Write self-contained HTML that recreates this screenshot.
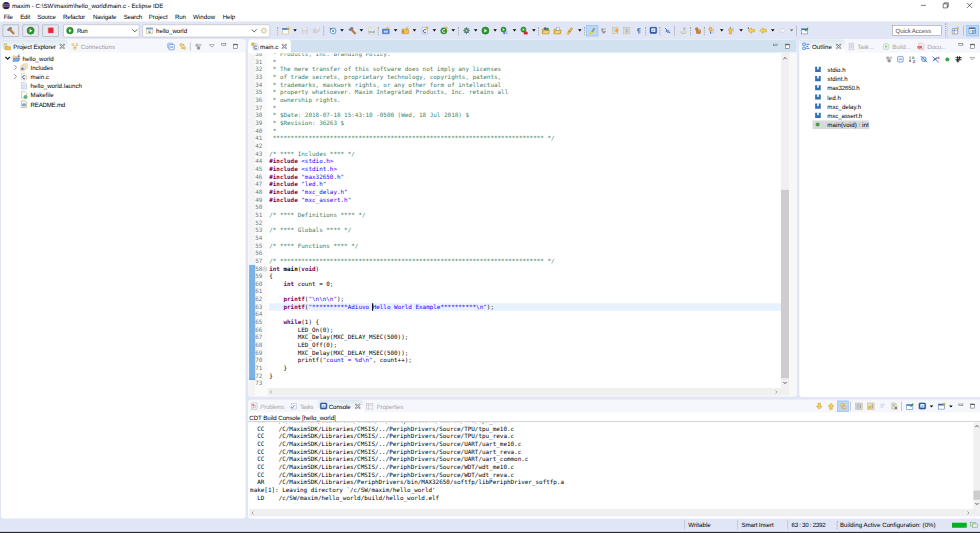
<!DOCTYPE html><html><head><meta charset="utf-8"><title>maxim - Eclipse IDE</title><style>
*{box-sizing:border-box;margin:0;padding:0}
html,body{width:980px;height:533px;overflow:hidden;background:#E1E6F6}
#root{text-rendering:geometricPrecision;position:absolute;left:0;top:0;width:1920px;height:1044.25px;transform:scale(0.510417);transform-origin:0 0;background:#E1E6F6;font-family:"Liberation Sans",sans-serif;font-size:12px;color:#000;overflow:hidden}
.a{position:absolute}
.t{position:absolute;white-space:pre;line-height:16px;height:16px}
.g{color:#8a8a8a}
.mono{font-family:"DejaVu Sans Mono","Liberation Mono",monospace;font-size:11.627px;white-space:pre;line-height:15px;height:15px;position:absolute}
.c{color:#3F7F5F}.k{color:#7F0055;font-weight:bold}.s{color:#2A00FF}.b{font-weight:bold}
.ln{color:#787878;text-align:right;width:40px}
.panel{position:absolute;background:#fff;border-radius:6px;overflow:hidden}
.tabrow{position:absolute;left:0;top:0;right:0;height:25px;background:#EFF2FB}
.btn{position:absolute;border:1px solid #9a9a9a;background:#E6E8F2;border-radius:2px}
.combo{position:absolute;border:1px solid #ADADAD;background:#fff;border-radius:2px}
.sep{position:absolute;width:1px;background:#9a9aa0}
.dots{position:absolute;width:2px;border-left:2px dotted #9c9a94;opacity:.85}
svg{position:absolute;overflow:visible}
</style></head><body><div id="root">
<div class="a" style="left:0.0px;top:0.0px;width:1920.0px;height:42.0px;background:#fff"></div>
<svg style="left:4px;top:3px" width="16" height="16" viewBox="0 0 16 16"><circle cx="8" cy="8" r="7.3" fill="#2C2255"/><rect x="1" y="6" width="14" height="1" fill="#fff" opacity=".7"/><rect x="1" y="8.5" width="14" height="1" fill="#fff" opacity=".7"/><path d="M2.800 3.200A7.300 7.300 0 0 0 2.800 12.800" stroke="#F0A040" stroke-width="1.300" fill="none"/></svg>
<div class="t " style="left:23.5px;top:4.0px;letter-spacing:0.033px;">maxim - C:\SW\maxim\hello_world\main.c - Eclipse IDE</div>
<svg style="left:1782.9px;top:0" width="140" height="22" viewBox="0 0 140 22">
<path d="M21.1 10.5h10" stroke="#000" stroke-width="1" fill="none"/>
<path d="M64.9 7.5h8v8h-8z M66.9 7.5v-2h8v8h-2" stroke="#000" stroke-width="1" fill="none"/>
<path d="M111.6 5.5l10 10 M111.6 15.5l10 -10" stroke="#000" stroke-width="1.1" fill="none"/>
</svg>
<div class="t " style="left:7.2px;top:24.9px;letter-spacing:-0.460px;">File</div>
<div class="t " style="left:39.6px;top:24.9px;letter-spacing:-0.370px;">Edit</div>
<div class="t " style="left:73.1px;top:24.9px;letter-spacing:-0.329px;">Source</div>
<div class="t " style="left:123.4px;top:24.9px;letter-spacing:-0.281px;">Refactor</div>
<div class="t " style="left:182.2px;top:24.9px;letter-spacing:-0.214px;">Navigate</div>
<div class="t " style="left:242.4px;top:24.9px;letter-spacing:-0.361px;">Search</div>
<div class="t " style="left:291.5px;top:24.9px;letter-spacing:-0.046px;">Project</div>
<div class="t " style="left:342.9px;top:24.9px;letter-spacing:-0.219px;">Run</div>
<div class="t " style="left:378.1px;top:24.9px;letter-spacing:0.136px;">Window</div>
<div class="t " style="left:436.5px;top:24.9px;letter-spacing:-0.194px;">Help</div>
<div class="btn" style="left:4.9px;top:47.6px;width:32.1px;height:24.3px;"></div>
<div class="btn" style="left:43.7px;top:47.6px;width:32.1px;height:24.3px;"></div>
<div class="btn" style="left:83.1px;top:47.6px;width:32.1px;height:24.3px;"></div>
<svg style="left:13.0px;top:51.8px" width="16" height="16" viewBox="0 0 16 16"><path d="M5.200 7.200L7.800 4.800L15 12.500Q15.300 14.800 12.800 15Z" fill="#C87A2A" stroke="#8A4F17" stroke-width=".7"/><path d="M0.800 6.500L5.500 1.800Q8 0.500 10.500 3.200L8.500 5.800L7 4.800L3.800 8.800Z" fill="#7A7A7A" stroke="#5a5a5a" stroke-width=".5"/></svg>
<svg style="left:51.8px;top:51.8px" width="16" height="16" viewBox="0 0 16 16"><circle cx="8" cy="8" r="7" fill="#2E9A2E" stroke="#1D6F1D" stroke-width="1"/><path d="M6 4.2l5.2 3.8-5.2 3.8z" fill="#fff"/></svg>
<div class="a" style="left:93.6px;top:54.3px;width:11.0px;height:11.0px;background:#E8242C;border:1px solid #F05A60;border-radius:1px"></div>
<div class="combo" style="left:124.2px;top:47.6px;width:149.3px;height:25.7px;"></div>
<svg style="left:129.1px;top:52.1px" width="16" height="16" viewBox="0 0 16 16"><circle cx="8" cy="8" r="6.5" fill="#2E9A2E" stroke="#1D6F1D" stroke-width="1"/><path d="M6 4.2l5.2 3.8-5.2 3.8z" fill="#fff"/></svg>
<div class="t " style="left:150.7px;top:52.8px;letter-spacing:-0.415px;">Run</div>
<svg style="left:257.5px;top:56.3px" width="12" height="8" viewBox="0 0 12 8"><path d="M1 1.5l5 5 5-5" stroke="#444" stroke-width="1.700" fill="none"/></svg>
<div class="combo" style="left:279.4px;top:47.6px;width:249.6px;height:25.7px;"></div>
<svg style="left:284.9px;top:51.8px" width="16" height="16" viewBox="0 0 16 16"><rect x="1.5" y="2.5" width="13" height="11" fill="#F4F8FC" stroke="#C9B26A"/><rect x="1.5" y="2.5" width="13" height="3" fill="#6E9BD1"/><text x="8" y="12.5" font-size="9" font-weight="bold" fill="#3B67A8" text-anchor="middle" font-family="Liberation Sans,sans-serif">c</text></svg>
<div class="t " style="left:305.8px;top:52.8px;letter-spacing:0.003px;">hello_world</div>
<svg style="left:492.2px;top:56.3px" width="12" height="8" viewBox="0 0 12 8"><path d="M1 1.5l5 5 5-5" stroke="#444" stroke-width="1.700" fill="none"/></svg>
<svg style="left:508.6px;top:51.8px" width="16" height="16" viewBox="0 0 16 16"><circle cx="8" cy="8" r="4" fill="none" stroke="#D9D3B0" stroke-width="2.4"/><path d="M8 1v14M1 8h14M3 3l10 10M13 3L3 13" stroke="#D9D3B0" stroke-width="1.6"/><circle cx="8" cy="8" r="2" fill="#fff"/></svg>
<div class="dots" style="left:543.1px;top:51.9px;height:16.7px"></div>
<svg style="left:551.7px;top:51.8px" width="16" height="16" viewBox="0 0 16 16"><rect x="1.5" y="3.5" width="12" height="11" fill="#FFFDF2" stroke="#C9B27A"/><rect x="1" y="3" width="13" height="3.500" fill="#3F7FD0"/><path d="M12.5 0.5l1 2.2 2.2 1-2.2 1-1 2.2-1-2.2-2.2-1 2.2-1z" fill="#F2C230" stroke="#B98A1A" stroke-width=".5"/></svg>
<svg style="left:573.8px;top:57.4px" width="8" height="5" viewBox="0 0 8 5"><path d="M0.5 0.5h7l-3.5 4z" fill="#000"/></svg>
<svg style="left:589.0px;top:51.8px" width="16" height="16" viewBox="0 0 16 16"><path d="M2 2h12v12H2z" fill="#CFCFD6"/><rect x="4" y="2" width="8" height="5" fill="#E9E9EE"/><rect x="4.5" y="9" width="7" height="5" fill="#E0E0E6"/></svg>
<svg style="left:611.7px;top:51.8px" width="16" height="16" viewBox="0 0 16 16"><path d="M1 4h9v9H1z" fill="#CFCFD6"/><path d="M5 1h10v10H5z" fill="#D6D6DC"/><rect x="7" y="1" width="6" height="4" fill="#EAEAEE"/></svg>
<div class="sep" style="left:633.5px;top:50.0px;height:19.6px;background:#9a9aa0"></div>
<svg style="left:643.6px;top:51.8px" width="16" height="16" viewBox="0 0 16 16"><circle cx="8.500" cy="8.500" r="5.500" fill="#F2F8FC" stroke="#6FB0DA" stroke-width="2.200"/><circle cx="8.500" cy="9" r="1.600" fill="#2F5FA8"/><path d="M8.500 5.500v3" stroke="#3F6FAE" stroke-width="1.200" fill="none"/><path d="M1.500 2.500l5 1.500-3 3z" fill="#5a6a7a"/></svg>
<svg style="left:666.0px;top:57.4px" width="8" height="5" viewBox="0 0 8 5"><path d="M0.5 0.5h7l-3.5 4z" fill="#000"/></svg>
<!-- hammer -->
<svg style="left:682.4px;top:51.8px" width="16" height="16" viewBox="0 0 16 16"><path d="M5.200 7.200L7.800 4.800L15 12.500Q15.300 14.800 12.800 15Z" fill="#C87A2A" stroke="#8A4F17" stroke-width=".7"/><path d="M0.800 6.500L5.500 1.800Q8 0.500 10.500 3.200L8.500 5.800L7 4.800L3.800 8.800Z" fill="#7A7A7A" stroke="#5a5a5a" stroke-width=".5"/></svg>
<svg style="left:704.4px;top:57.4px" width="8" height="5" viewBox="0 0 8 5"><path d="M0.5 0.5h7l-3.5 4z" fill="#000"/></svg>
<svg style="left:719.6px;top:51.8px" width="16" height="16" viewBox="0 0 16 16"><path d="M2.500 1.500h7.500l3.500 3.500v9.500h-11z" fill="#FDFCF4" stroke="#CDB987"/><path d="M5 5h5" stroke="#7FA3D6" stroke-width="1.200"/><text x="8" y="13" font-size="6.500" font-weight="bold" fill="#3F6FBF" text-anchor="middle" font-family="Liberation Sans,sans-serif">010</text></svg>
<div class="dots" style="left:740.0px;top:51.9px;height:16.7px"></div>
<svg style="left:747.7px;top:51.8px" width="16" height="16" viewBox="0 0 16 16"><path d="M1.5 5h13v9h-13z" fill="#4F86D6" stroke="#2F5FA8"/><rect x="4" y="8" width="8" height="4" fill="#BFD6F5"/><path d="M11.5 0.5l1 2.2 2.2 1-2.2 1-1 2.2-1-2.2-2.2-1 2.2-1z" fill="#F2C230" stroke="#B98A1A" stroke-width=".5"/></svg>
<svg style="left:770.5px;top:57.4px" width="8" height="5" viewBox="0 0 8 5"><path d="M0.5 0.5h7l-3.5 4z" fill="#000"/></svg>
<svg style="left:786.1px;top:51.8px" width="16" height="16" viewBox="0 0 16 16"><path d="M1.5 5h5l1.5 1.5h6.5v7.5h-13z" fill="#F1C14B" stroke="#B88A21"/><rect x="2.5" y="8" width="3" height="4" fill="#4F86D6"/><path d="M11.5 0.5l1 2.2 2.2 1-2.2 1-1 2.2-1-2.2-2.2-1 2.2-1z" fill="#F2C230" stroke="#B98A1A" stroke-width=".5"/></svg>
<svg style="left:808.3px;top:57.4px" width="8" height="5" viewBox="0 0 8 5"><path d="M0.5 0.5h7l-3.5 4z" fill="#000"/></svg>
<svg style="left:824.1px;top:51.8px" width="16" height="16" viewBox="0 0 16 16"><path d="M3 1.5h10v13H3z" fill="#F6F8FC" stroke="#8DA3C4"/><path d="M10.5 7a3 3 0 1 0 0 4" stroke="#2F5FA8" stroke-width="1.8" fill="none"/><path d="M12.5 0l.9 2 2 .9-2 .9-.9 2-.9-2-2-.9 2-.9z" fill="#F2C230" stroke="#B98A1A" stroke-width=".5"/></svg>
<svg style="left:846.5px;top:57.4px" width="8" height="5" viewBox="0 0 8 5"><path d="M0.5 0.5h7l-3.5 4z" fill="#000"/></svg>
<svg style="left:861.9px;top:51.8px" width="16" height="16" viewBox="0 0 16 16"><circle cx="7.5" cy="8.5" r="6" fill="#2E9A2E" stroke="#1D6F1D"/><path d="M10 6.5a3 3 0 1 0 0 4" stroke="#fff" stroke-width="1.6" fill="none"/><path d="M12.5 0l.9 2 2 .9-2 .9-.9 2-.9-2-2-.9 2-.9z" fill="#F2C230" stroke="#B98A1A" stroke-width=".5"/></svg>
<svg style="left:884.3px;top:57.4px" width="8" height="5" viewBox="0 0 8 5"><path d="M0.5 0.5h7l-3.5 4z" fill="#000"/></svg>
<div class="dots" style="left:896.9px;top:51.9px;height:16.7px"></div>
<svg style="left:905.6px;top:51.8px" width="16" height="16" viewBox="0 0 16 16"><path d="M8 1v14M1 8h14M3 3l10 10M13 3L3 13" stroke="#3B6F6A" stroke-width="1.3"/><ellipse cx="8" cy="8" rx="4" ry="4.5" fill="#4C8F86" stroke="#2D5F5A"/><circle cx="8" cy="8" r="1.8" fill="#D7E36B"/></svg>
<svg style="left:927.8px;top:57.4px" width="8" height="5" viewBox="0 0 8 5"><path d="M0.5 0.5h7l-3.5 4z" fill="#000"/></svg>
<svg style="left:943.2px;top:51.8px" width="16" height="16" viewBox="0 0 16 16"><circle cx="8" cy="8" r="7" fill="#2E9A2E" stroke="#1D6F1D"/><path d="M6 4.2l5.2 3.8-5.2 3.8z" fill="#fff"/></svg>
<svg style="left:965.8px;top:57.4px" width="8" height="5" viewBox="0 0 8 5"><path d="M0.5 0.5h7l-3.5 4z" fill="#000"/></svg>
<svg style="left:980.4px;top:51.8px" width="16" height="16" viewBox="0 0 16 16"><circle cx="6.5" cy="6" r="5" fill="#2E9A2E" stroke="#1D6F1D"/><path d="M5 3.4l3.8 2.6-3.8 2.6z" fill="#fff"/><rect x="6" y="10" width="4" height="5" fill="#5E8FD0"/><rect x="11" y="9" width="3" height="6" fill="#9DBBE6"/></svg>
<svg style="left:1003.8px;top:57.4px" width="8" height="5" viewBox="0 0 8 5"><path d="M0.5 0.5h7l-3.5 4z" fill="#000"/></svg>
<svg style="left:1019.2px;top:51.8px" width="16" height="16" viewBox="0 0 16 16"><circle cx="6.5" cy="6" r="5" fill="#2E9A2E" stroke="#1D6F1D"/><path d="M5 3.4l3.8 2.6-3.8 2.6z" fill="#fff"/><path d="M7.5 11.5h7v3.5h-7z M9 11.5v-1.5h4v1.5" fill="#D8262C" stroke="#A31A1F" stroke-width=".6"/></svg>
<svg style="left:1041.8px;top:57.4px" width="8" height="5" viewBox="0 0 8 5"><path d="M0.5 0.5h7l-3.5 4z" fill="#000"/></svg>
<div class="dots" style="left:1054.4px;top:51.9px;height:16.7px"></div>
<svg style="left:1061.3px;top:51.8px" width="16" height="16" viewBox="0 0 16 16"><path d="M1.5 5h4.5l1.2 1.5h7.3v7.5h-13z" fill="#E9B84A" stroke="#B88A21"/><path d="M1.5 14l2.5-6h11.5l-2.5 6z" fill="#F6D77F" stroke="#B88A21"/><circle cx="7" cy="4" r="2.8" fill="#5B4FB0"/><circle cx="11.5" cy="5" r="2.8" fill="#2E9A2E"/></svg>
<svg style="left:1084.2px;top:51.8px" width="16" height="16" viewBox="0 0 16 16"><path d="M1.5 5h4.5l1.2 1.5h7.3v7.5h-13z" fill="#E9B84A" stroke="#B88A21"/><path d="M1.5 14l2.5-6h11.5l-2.5 6z" fill="#F6D77F" stroke="#B88A21"/><rect x="6" y="2" width="6" height="5" fill="#F6F8FC" stroke="#8DA3C4"/></svg>
<svg style="left:1107.8px;top:51.8px" width="16" height="16" viewBox="0 0 16 16"><path d="M2 14l9-12 3.5 2.5-9 11z" fill="#E9B84A" stroke="#B88A21" stroke-width=".8"/><path d="M6 8l4 3" stroke="#8a8a8a" stroke-width="2"/><path d="M2 14l1-3 2.5 2z" fill="#F9E9A8"/></svg>
<svg style="left:1131.5px;top:57.4px" width="8" height="5" viewBox="0 0 8 5"><path d="M0.5 0.5h7l-3.5 4z" fill="#000"/></svg>
<div class="dots" style="left:1144.1px;top:51.9px;height:16.7px"></div>
<div class="a" style="left:1148.1px;top:49.0px;width:23.5px;height:21.6px;background:#BBD7F7;border:1px solid #8DBBEF"></div>
<svg style="left:1151.8px;top:51.8px" width="16" height="16" viewBox="0 0 16 16"><path d="M4 13l7.5-10.5 2.5 2-7 10z" fill="#8C8F78"/><path d="M2 13.5l5-4 3 2-4 3.5z" fill="#F5E21E" stroke="#C7B40E" stroke-width=".5"/></svg>
<svg style="left:1174.8px;top:51.8px" width="16" height="16" viewBox="0 0 16 16"><circle cx="5" cy="6" r="2.5" fill="#9a9a9a"/><circle cx="10" cy="5" r="2" fill="#bdbdbd"/><path d="M3 9h10l-5 5z" fill="#8a8a8a"/></svg>
<svg style="left:1197.9px;top:51.8px" width="16" height="16" viewBox="0 0 16 16"><rect x="1.5" y="1.5" width="11" height="12" fill="#E6E0C8" stroke="#C9BC8C"/><rect x="4" y="4" width="5" height="7" fill="#BFD0EA"/><path d="M9 4l5 2-2 6-4-2z" fill="#E9A63A"/></svg>
<svg style="left:1220.4px;top:51.8px" width="16" height="16" viewBox="0 0 16 16"><rect x="2" y="1.5" width="12" height="13" fill="#E0DDD0" stroke="#C9BC8C"/><ellipse cx="8" cy="8" rx="2" ry="4" fill="#B7C9E6" stroke="#8FA8D0"/></svg>
<svg style="left:1242.9px;top:52.7px" width="16" height="16" viewBox="0 0 16 16"><path d="M6 3h6M8 3v10M10.5 3v10" stroke="#4F7FBF" stroke-width="1.5" fill="none"/><path d="M8 3a3 3 0 0 0 0 6z" fill="#4F7FBF"/></svg>
<div class="dots" style="left:1263.7px;top:51.9px;height:16.7px"></div>
<svg style="left:1272.1px;top:51.8px" width="16" height="16" viewBox="0 0 16 16"><rect x="1.5" y="1.5" width="13" height="12" rx="2" fill="#2F5FA8" stroke="#1F4586"/><rect x="4" y="3.5" width="8" height="7" fill="#EAF1FA"/><path d="M6 8h3V6" stroke="#2F5FA8" fill="none"/></svg>
<div class="dots" style="left:1292.1px;top:51.9px;height:16.7px"></div>
<svg style="left:1299.8px;top:51.8px" width="16" height="16" viewBox="0 0 16 16"><path d="M3 3l10 10" stroke="#34508E" stroke-width="1.6"/><path d="M5 5l6 6-1.5 1.5-5.5-2.5z" fill="#5A8FCF"/><circle cx="9" cy="9" r="2.5" fill="#6FA0D8"/></svg>
<div class="sep" style="left:1321.0px;top:50.0px;height:19.6px;background:#9a9aa0"></div>
<svg style="left:1331.1px;top:51.8px" width="16" height="16" viewBox="0 0 16 16"><path d="M3 9a5 4.5 0 1 0 10 0" fill="none" stroke="#CFC8A6" stroke-width="2.6"/><path d="M9 2l4 2.5-4 2.5z" fill="#9FB79F"/><path d="M9 2v8" stroke="#9a9a8a" stroke-width="1"/></svg>
<div class="dots" style="left:1351.8px;top:51.9px;height:16.7px"></div>
<svg style="left:1358.5px;top:51.8px" width="16" height="16" viewBox="0 0 16 16"><circle cx="6" cy="5" r="3.5" fill="#C9822F"/><rect x="5" y="6" width="9" height="8" rx="2" fill="#B5752B"/><path d="M7 8h6M7 10.5h6M9 6.5v7M11.5 6.5v7" stroke="#E7B26A" stroke-width=".7"/></svg>
<div class="dots" style="left:1379.4px;top:51.9px;height:16.7px"></div>
<svg style="left:1385.0px;top:51.8px" width="16" height="16" viewBox="0 0 16 16"><ellipse cx="7" cy="5.5" rx="3" ry="4.5" fill="#F1C14B" stroke="#C9962A"/><rect x="6" y="10" width="2.5" height="4" fill="#4F7FBF"/><path d="M12.5 4v10" stroke="#9a9aa0"/></svg>
<svg style="left:1410.1px;top:57.4px" width="8" height="5" viewBox="0 0 8 5"><path d="M0.5 0.5h7l-3.5 4z" fill="#000"/></svg>
<svg style="left:1424.2px;top:51.8px" width="16" height="16" viewBox="0 0 16 16"><path d="M7 2l4.5 5h-2.5v7.5h-4v-7.5h-2.5z" fill="#F1C14B" stroke="#C9962A"/><path d="M12.5 2v9" stroke="#9a9aa0"/><circle cx="7" cy="1.5" r="1" fill="#4F7FBF"/></svg>
<svg style="left:1448.1px;top:57.4px" width="8" height="5" viewBox="0 0 8 5"><path d="M0.5 0.5h7l-3.5 4z" fill="#000"/></svg>
<svg style="left:1463.9px;top:51.8px" width="16" height="16" viewBox="0 0 16 16"><path d="M1.5 8l6.5-5.5v3h6.5v5h-6.5v3z" fill="#F7D154" stroke="#C9962A"/><rect x="1" y="2" width="2.5" height="2.5" fill="#34508E"/></svg>
<svg style="left:1487.2px;top:51.8px" width="16" height="16" viewBox="0 0 16 16"><path d="M1.5 8l6.5-5.5v3h6.5v5h-6.5v3z" fill="#F7D154" stroke="#C9962A"/></svg>
<svg style="left:1509.5px;top:57.4px" width="8" height="5" viewBox="0 0 8 5"><path d="M0.5 0.5h7l-3.5 4z" fill="#000"/></svg>
<svg style="left:1525.1px;top:51.8px" width="16" height="16" viewBox="0 0 16 16"><path d="M14.5 8l-6.5-5.5v3h-6.5v5h6.5v3z" fill="#F4F4F8" stroke="#C8C8D0"/></svg>
<svg style="left:1547.3px;top:57.4px" width="8" height="5" viewBox="0 0 8 5"><path d="M0.5 0.5h7l-3.5 4z" fill="#777"/></svg>
<div class="sep" style="left:1560.0px;top:50.0px;height:19.6px;background:#9a9aa0"></div>
<svg style="left:1569.1px;top:51.8px" width="16" height="16" viewBox="0 0 16 16"><rect x="1.5" y="4.5" width="12" height="10" fill="#fff" stroke="#3C6DB0"/><rect x="1.5" y="4.5" width="12" height="2.5" fill="#3C6DB0"/><path d="M8 8l5-6 2 1.5-5 6z" fill="#2E9A2E"/></svg>
<div class="a" style="left:1747.8px;top:49.2px;width:97.0px;height:20.8px;background:#fff;border:1px solid #8a8a8a"></div>
<div class="t " style="left:1754.4px;top:52.8px;letter-spacing:-0.206px;color:#555">Quick Access</div>
<div class="dots" style="left:1852.4px;top:46.0px;height:27.4px"></div>
<div class="sep" style="left:1855.6px;top:43.1px;height:33.3px;background:#CDD3E8"></div>
<svg style="left:1864.0px;top:51.8px" width="16" height="16" viewBox="0 0 16 16"><rect x="1.5" y="4.5" width="11" height="10" fill="#fff" stroke="#3C6DB0"/><path d="M1.5 8h11M6 4.500v10" stroke="#3C6DB0"/><rect x="2" y="9" width="4" height="5" fill="#E9D27A"/><path d="M12 0l1 2.3 2.3 1-2.3 1-1 2.300-1-2.300-2.300-1 2.300-1z" fill="#F2C230" stroke="#B98A1A" stroke-width=".5"/></svg>
<div class="sep" style="left:1886.6px;top:50.0px;height:19.6px;background:#9a9aa0"></div>
<div class="a" style="left:1893.2px;top:49.0px;width:24.5px;height:21.9px;background:#BBD7F7;border:1px solid #8DBBEF"></div>
<svg style="left:1897.3px;top:51.8px" width="16" height="16" viewBox="0 0 16 16"><rect x="1.500" y="2.500" width="12" height="11" fill="#fff" stroke="#3C6DB0"/><rect x="1.5" y="2.5" width="12" height="2.5" fill="#3C6DB0"/><rect x="3" y="7" width="4" height="5" fill="#E9D27A"/><rect x="8" y="8" width="6" height="6" fill="#DCE8F8" stroke="#3C6DB0"/><text x="11" y="13.3" font-size="6" fill="#2F5FA8" text-anchor="middle" font-family="Liberation Sans,sans-serif" font-weight="bold">c</text></svg>
<div class="panel" style="left:2.4px;top:77.4px;width:478.8px;height:938.6px;border-radius:6px;">
<div class="tabrow" style="height:26.0px;background:#F5F7FC"></div>
<div class="a" style="left:0;top:0;width:131.3px;height:26.0px;background:linear-gradient(#DDE7F0,#FFFFFF 90%);border-radius:6px 10px 0 0"></div>
<div class="a" style="left:-2.35px;top:0;width:600px;height:100%">
<svg style="left:6.3px;top:5.3px" width="16" height="16" viewBox="0 0 16 16"><path d="M2 2.500h5l1 2h-6z" fill="#E9D9A0" stroke="#B8A15A" stroke-width=".8"/><path d="M4.500 7h4l1 1.500h5v6h-10z" fill="#F1C14B" stroke="#B88A21"/><path d="M2 4.500v8h2.500" fill="none" stroke="#B8A15A"/></svg>
<div class="t " style="left:25.7px;top:6.3px;letter-spacing:-0.119px;">Project Explorer</div>
<svg style="left:116.4px;top:7.3px" width="12" height="12" viewBox="0 0 12 12"><path d="M1.5 1.500l9 9M10.500 1.500l-9 9" stroke="#777" stroke-width="3.200" fill="none"/><path d="M2 2l8 8M10 2l-8 8" stroke="#fff" stroke-width="1.300" fill="none"/></svg>
<svg style="left:138.9px;top:5.3px" width="16" height="16" viewBox="0 0 16 16"><path d="M3 4l9 8M12 4l-8 8" stroke="#E5B64C" stroke-width="1.3"/><rect x="2" y="3" width="3.500" height="3.500" fill="#fff" stroke="#D9A431"/><rect x="10" y="3" width="3.500" height="3.500" fill="#fff" stroke="#D9A431"/><rect x="6" y="10" width="3.500" height="3.500" fill="#fff" stroke="#D9A431"/></svg>
<div class="t " style="left:158.3px;top:6.3px;letter-spacing:0.027px;color:#9a9a9a">Connections</div>
<svg style="left:327.0px;top:5.3px" width="16" height="16" viewBox="0 0 16 16"><rect x="1.500" y="1.500" width="10" height="10" rx="1.500" fill="#DCE9F8" stroke="#6C9FD8" stroke-width="1.200"/><rect x="4" y="4" width="10.500" height="10.500" rx="1.500" fill="#F2F7FD" stroke="#4F86CF" stroke-width="1.300"/><path d="M6.500 9.200h5.500" stroke="#3F73BF" stroke-width="1.600"/></svg>
<svg style="left:349.6px;top:5.3px" width="16" height="16" viewBox="0 0 16 16"><path d="M1.500 5l3.500-3.500v2.200h5.500v2.600h-5.500v2.200z" fill="#FBE9A8" stroke="#D09A25" stroke-width="1.100"/><path d="M14.500 11l-3.500-3.500v2.200h-5.500v2.600h5.500v2.200z" fill="#FBE9A8" stroke="#D09A25" stroke-width="1.100"/></svg>
<div class="sep" style="left:372.2px;top:5.3px;height:16px;background:#9a9aa0"></div>
<svg style="left:380.9px;top:5.3px" width="16" height="16" viewBox="0 0 16 16"><circle cx="5" cy="5.500" r="3.300" fill="#B4B4B4"/><circle cx="11" cy="5" r="3" fill="#CACACA"/><circle cx="8" cy="11" r="3.500" fill="#9A9A9A"/></svg>
<svg style="left:409.3px;top:8.3px" width="12" height="8" viewBox="0 0 12 8"><path d="M1.500 1.500h9l-4.500 5z" fill="#fff" stroke="#666" stroke-width="1"/></svg>
<svg style="left:432.9px;top:7.1px" width="12" height="12" viewBox="0 0 12 12"><rect x="1.5" y="1.5" width="8" height="3" fill="#fff" stroke="#555"/></svg>
<svg style="left:455.8px;top:7.3px" width="12" height="12" viewBox="0 0 12 12"><rect x="1.5" y="1.5" width="8" height="8" fill="#fff" stroke="#555"/><rect x="1.5" y="1.5" width="8" height="2" fill="#555"/></svg>
<svg style="left:9.7px;top:31.7px" width="10" height="10" viewBox="0 0 10 10"><path d="M0.500 2.500l4.500 4.500 4.500-4.500" stroke="#1a1a1a" stroke-width="2.500" fill="none"/></svg>
<svg style="left:23.5px;top:28.7px" width="16" height="16" viewBox="0 0 16 16"><path d="M1.500 3.500h4l1.500 1.500h5.500v5h-11z" fill="#F7E19A" stroke="#D9A431"/><path d="M1 14l2.500-6h11.500l-2.500 6z" fill="#7FAEEA" stroke="#2F62B8"/><text x="10.500" y="6" font-size="9" font-weight="bold" fill="#2F5FA8" font-family="Liberation Sans,sans-serif">c</text></svg>
<div class="t " style="left:44.1px;top:29.7px;letter-spacing:0.048px;">hello_world</div>
<svg style="left:25.4px;top:49.7px" width="10" height="10" viewBox="0 0 10 10"><path d="M3 0.500l4.500 4.500-4.500 4.500" stroke="#8a8a8a" stroke-width="1.900" fill="none"/></svg>
<svg style="left:39.2px;top:46.7px" width="16" height="16" viewBox="0 0 16 16"><path d="M7.500 1h7v9h-7z" fill="#FBF6E6" stroke="#D2B070" stroke-width=".9"/><path d="M4.500 3h7v9h-7z" fill="#FBF6E6" stroke="#D2B070" stroke-width=".9"/><path d="M1.500 5.500h7v9.500h-7z" fill="#FBF6E6" stroke="#D2B070" stroke-width=".9"/><rect x="3" y="8.500" width="4" height="4.500" fill="#3F6FBF"/></svg>
<div class="t " style="left:59.8px;top:47.7px;letter-spacing:-0.077px;">Includes</div>
<svg style="left:25.4px;top:67.7px" width="10" height="10" viewBox="0 0 10 10"><path d="M3 0.500l4.500 4.500-4.500 4.500" stroke="#8a8a8a" stroke-width="1.900" fill="none"/></svg>
<svg style="left:39.2px;top:64.7px" width="16" height="16" viewBox="0 0 16 16"><path d="M3 1.500h7l3 3v10H3z" fill="#FDFCF4" stroke="#CDB987"/><path d="M10.500 7.300a3 3 0 1 0 0 4" stroke="#2F5FA8" stroke-width="1.800" fill="none"/></svg>
<div class="t " style="left:59.8px;top:65.7px;letter-spacing:0.232px;">main.c</div>
<svg style="left:39.2px;top:82.7px" width="16" height="16" viewBox="0 0 16 16"><path d="M3 1.500h7l3 3v10H3z" fill="#EEF2FA" stroke="#9DB0CF"/><path d="M5 6h6M5 8h6M5 10h6M5 12h4" stroke="#B9C7E0" stroke-width=".9"/></svg>
<div class="t " style="left:59.8px;top:83.7px;letter-spacing:0.084px;">hello_world.launch</div>
<svg style="left:39.2px;top:100.7px" width="16" height="16" viewBox="0 0 16 16"><path d="M3 1.500h7l3 3v10H3z" fill="#FBFBF6" stroke="#A8A890"/><circle cx="11" cy="12" r="3.500" fill="#5FB87A" stroke="#3A8A55" stroke-width=".6"/></svg>
<div class="t " style="left:59.8px;top:101.7px;letter-spacing:0.109px;">Makefile</div>
<svg style="left:39.2px;top:118.7px" width="16" height="16" viewBox="0 0 16 16"><path d="M3 1.500h7l3 3v10H3z" fill="#F6F8FC" stroke="#A89048"/><rect x="5" y="7" width="6" height="5" fill="#3F6FAE"/><path d="M6 8.500h4M6 10.500h4" stroke="#fff" stroke-width=".8"/></svg>
<div class="t " style="left:59.8px;top:119.7px;letter-spacing:-0.417px;">README.md</div>
</div>
</div>
<div class="panel" style="left:486.3px;top:77.4px;width:1074.8px;height:699.6px;">
<div class="tabrow" style="height:26.0px;background:#D2E1F0"></div>
<div class="a" style="left:0;top:0;width:84.2px;height:27.0px;background:#fff;border-radius:6px 8px 0 0"></div>
<svg style="left:5.3px;top:5.7px" width="16" height="16" viewBox="0 0 16 16"><path d="M4 2.500h7l3 3v9H4z" fill="#F6F8FC" stroke="#8DA3C4"/><path d="M11.500 8a3 3 0 1 0 0 4" stroke="#2F5FA8" stroke-width="1.800" fill="none"/><path d="M1 1h5v5H1z" fill="#E9C85A" stroke="#A8862A" stroke-width=".8"/></svg>
<div class="t " style="left:23.1px;top:6.7px;letter-spacing:0.085px;">main.c</div>
<svg style="left:65.1px;top:7.7px" width="12" height="12" viewBox="0 0 12 12"><path d="M1.5 1.500l9 9M10.500 1.500l-9 9" stroke="#777" stroke-width="3.200" fill="none"/><path d="M2 2l8 8M10 2l-8 8" stroke="#fff" stroke-width="1.300" fill="none"/></svg>
<svg style="left:1028.1px;top:7.5px" width="12" height="12" viewBox="0 0 12 12"><rect x="1.5" y="1.5" width="8" height="3" fill="#fff" stroke="#555"/></svg>
<svg style="left:1050.6px;top:7.7px" width="12" height="12" viewBox="0 0 12 12"><rect x="1.5" y="1.5" width="8" height="8" fill="#fff" stroke="#555"/><rect x="1.5" y="1.5" width="8" height="2" fill="#555"/></svg>
<div class="a" style="left:0;top:28.0px;right:0;bottom:0;overflow:hidden">
<div class="a" style="left:0;top:-2px;width:37.8px;bottom:0;background:#FBFBFB"></div>
<div class="a" style="left:0;top:-2px;width:13.7px;bottom:0;background:#F4F4F4"></div>
<div class="a" style="left:41.1px;top:488.8px;width:1003.1px;height:15px;background:#E8F2FE"></div>
<div class="a" style="left:1.6px;top:413.7px;width:12.1px;height:225.3px;background:#78B2E6;border-bottom:2px solid #5A9BDC"></div>
<div class="mono ln" style="left:-12.4px;top:-6.8px">30</div>
<div class="mono" style="left:41.1px;top:-6.8px"><span class="c"> * Products, Inc. Branding Policy.</span></div>
<div class="mono ln" style="left:-12.4px;top:8.2px">31</div>
<div class="mono" style="left:41.1px;top:8.2px"><span class="c"> *</span></div>
<div class="mono ln" style="left:-12.4px;top:23.3px">32</div>
<div class="mono" style="left:41.1px;top:23.3px"><span class="c"> * The mere transfer of this software does not imply any licenses</span></div>
<div class="mono ln" style="left:-12.4px;top:38.3px">33</div>
<div class="mono" style="left:41.1px;top:38.3px"><span class="c"> * of trade secrets, proprietary technology, copyrights, patents,</span></div>
<div class="mono ln" style="left:-12.4px;top:53.3px">34</div>
<div class="mono" style="left:41.1px;top:53.3px"><span class="c"> * trademarks, maskwork rights, or any other form of intellectual</span></div>
<div class="mono ln" style="left:-12.4px;top:68.3px">35</div>
<div class="mono" style="left:41.1px;top:68.3px"><span class="c"> * property whatsoever. Maxim Integrated Products, Inc. retains all</span></div>
<div class="mono ln" style="left:-12.4px;top:83.3px">36</div>
<div class="mono" style="left:41.1px;top:83.3px"><span class="c"> * ownership rights.</span></div>
<div class="mono ln" style="left:-12.4px;top:98.3px">37</div>
<div class="mono" style="left:41.1px;top:98.3px"><span class="c"> *</span></div>
<div class="mono ln" style="left:-12.4px;top:113.4px">38</div>
<div class="mono" style="left:41.1px;top:113.4px"><span class="c"> * $Date: 2018-07-18 15:43:10 -0500 (Wed, 18 Jul 2018) $</span></div>
<div class="mono ln" style="left:-12.4px;top:128.4px">39</div>
<div class="mono" style="left:41.1px;top:128.4px"><span class="c"> * $Revision: 36263 $</span></div>
<div class="mono ln" style="left:-12.4px;top:143.4px">40</div>
<div class="mono" style="left:41.1px;top:143.4px"><span class="c"> *</span></div>
<div class="mono ln" style="left:-12.4px;top:158.4px">41</div>
<div class="mono" style="left:41.1px;top:158.4px"><span class="c"> **************************************************************************** */</span></div>
<div class="mono ln" style="left:-12.4px;top:173.4px">42</div>
<div class="mono ln" style="left:-12.4px;top:188.4px">43</div>
<div class="mono" style="left:41.1px;top:188.4px"><span class="c">/* **** Includes **** */</span></div>
<div class="mono ln" style="left:-12.4px;top:203.5px">44</div>
<div class="mono" style="left:41.1px;top:203.5px"><span class="k">#include</span> <span class="s">&lt;stdio.h&gt;</span></div>
<div class="mono ln" style="left:-12.4px;top:218.5px">45</div>
<div class="mono" style="left:41.1px;top:218.5px"><span class="k">#include</span> <span class="s">&lt;stdint.h&gt;</span></div>
<div class="mono ln" style="left:-12.4px;top:233.5px">46</div>
<div class="mono" style="left:41.1px;top:233.5px"><span class="k">#include</span> <span class="s">&quot;max32650.h&quot;</span></div>
<div class="mono ln" style="left:-12.4px;top:248.5px">47</div>
<div class="mono" style="left:41.1px;top:248.5px"><span class="k">#include</span> <span class="s">&quot;led.h&quot;</span></div>
<div class="mono ln" style="left:-12.4px;top:263.5px">48</div>
<div class="mono" style="left:41.1px;top:263.5px"><span class="k">#include</span> <span class="s">&quot;mxc_delay.h&quot;</span></div>
<div class="mono ln" style="left:-12.4px;top:278.5px">49</div>
<div class="mono" style="left:41.1px;top:278.5px"><span class="k">#include</span> <span class="s">&quot;mxc_assert.h&quot;</span></div>
<div class="mono ln" style="left:-12.4px;top:293.6px">50</div>
<div class="mono ln" style="left:-12.4px;top:308.6px">51</div>
<div class="mono" style="left:41.1px;top:308.6px"><span class="c">/* **** Definitions **** */</span></div>
<div class="mono ln" style="left:-12.4px;top:323.6px">52</div>
<div class="mono ln" style="left:-12.4px;top:338.6px">53</div>
<div class="mono" style="left:41.1px;top:338.6px"><span class="c">/* **** Globals **** */</span></div>
<div class="mono ln" style="left:-12.4px;top:353.6px">54</div>
<div class="mono ln" style="left:-12.4px;top:368.6px">55</div>
<div class="mono" style="left:41.1px;top:368.6px"><span class="c">/* **** Functions **** */</span></div>
<div class="mono ln" style="left:-12.4px;top:383.7px">56</div>
<div class="mono ln" style="left:-12.4px;top:398.7px">57</div>
<div class="mono" style="left:41.1px;top:398.7px"><span class="c">/* ************************************************************************** */</span></div>
<div class="mono ln" style="left:-12.4px;top:413.7px">58</div>
<div class="mono" style="left:41.1px;top:413.7px"><span class="k">int</span> <span class="b">main</span>(<span class="k">void</span>)</div>
<div class="mono ln" style="left:-12.4px;top:428.7px">59</div>
<div class="mono" style="left:41.1px;top:428.7px">{</div>
<div class="mono ln" style="left:-12.4px;top:443.7px">60</div>
<div class="mono" style="left:41.1px;top:443.7px">    <span class="k">int</span> count = 0;</div>
<div class="mono ln" style="left:-12.4px;top:458.8px">61</div>
<div class="mono ln" style="left:-12.4px;top:473.8px">62</div>
<div class="mono" style="left:41.1px;top:473.8px">    <span class="k">printf</span>(<span class="s">&quot;\n\n\n&quot;</span>);</div>
<div class="mono ln" style="left:-12.4px;top:488.8px">63</div>
<div class="mono" style="left:41.1px;top:488.8px">    <span class="k">printf</span>(<span class="s">&quot;**********Adiuvo Hello World Example**********\n&quot;</span>);</div>
<div class="mono ln" style="left:-12.4px;top:503.8px">64</div>
<div class="mono ln" style="left:-12.4px;top:518.8px">65</div>
<div class="mono" style="left:41.1px;top:518.8px">    <span class="k">while</span>(1) {</div>
<div class="mono ln" style="left:-12.4px;top:533.8px">66</div>
<div class="mono" style="left:41.1px;top:533.8px">        LED_On(0);</div>
<div class="mono ln" style="left:-12.4px;top:548.9px">67</div>
<div class="mono" style="left:41.1px;top:548.9px">        MXC_Delay(MXC_DELAY_MSEC(500));</div>
<div class="mono ln" style="left:-12.4px;top:563.9px">68</div>
<div class="mono" style="left:41.1px;top:563.9px">        LED_Off(0);</div>
<div class="mono ln" style="left:-12.4px;top:578.9px">69</div>
<div class="mono" style="left:41.1px;top:578.9px">        MXC_Delay(MXC_DELAY_MSEC(500));</div>
<div class="mono ln" style="left:-12.4px;top:593.9px">70</div>
<div class="mono" style="left:41.1px;top:593.9px">        printf(<span class="s">&quot;count = %d\n&quot;</span>, count++);</div>
<div class="mono ln" style="left:-12.4px;top:608.9px">71</div>
<div class="mono" style="left:41.1px;top:608.9px">    }</div>
<div class="mono ln" style="left:-12.4px;top:623.9px">72</div>
<div class="mono" style="left:41.1px;top:623.9px">}</div>
<div class="mono ln" style="left:-12.4px;top:639.0px">73</div>
<svg style="left:27.3px;top:416.2px" width="10" height="10" viewBox="0 0 10 10"><circle cx="5" cy="5" r="4" fill="#fff" stroke="#9a9a9a"/><path d="M3 5h4" stroke="#666"/></svg>
<div class="a" style="left:243.1px;top:488.8px;width:2px;height:15px;background:#000"></div>
</div>
<div class="a" style="left:1043.9px;top:26.0px;width:15.5px;height:657.0px;background:#F0F0F0"></div>
<div class="a" style="left:1043.9px;top:295.1px;width:15.5px;height:368.1px;background:#CDCDCD"></div>
<div class="a" style="left:1059.3px;top:26.0px;width:16.7px;bottom:0;background:#F8F8F8"></div>
<div class="a" style="left:1043.9px;top:682.8px;width:15.5px;height:14.5px;background:#F0F0F0"></div>
<svg style="left:1047.5px;top:33.2px" width="8" height="8" viewBox="0 0 10 10"><path d="M1 6l4-4 4 4" stroke="#4a4a4a" stroke-width="2.200" fill="none"/></svg>
<svg style="left:1047.5px;top:669.0px" width="8" height="8" viewBox="0 0 10 10"><path d="M1 3l4 4 4-4" stroke="#4a4a4a" stroke-width="2.200" fill="none"/></svg>
<div class="a" style="left:38.0px;top:682.8px;width:1006.2px;height:14.7px;background:#F0F0F0"></div>
<svg style="left:41.6px;top:686.2px" width="8" height="8" viewBox="0 0 10 10"><path d="M6 1l-4 4 4 4" stroke="#a0a0a0" stroke-width="2.200" fill="none"/></svg>
<svg style="left:1031.2px;top:686.2px" width="8" height="8" viewBox="0 0 10 10"><path d="M3 1l4 4-4 4" stroke="#a0a0a0" stroke-width="2.200" fill="none"/></svg>
</div>
<div class="panel" style="left:1566.4px;top:77.4px;width:355.6px;height:701.0px;border-radius:6px 0 0 6px;">
<div class="tabrow" style="height:26.0px;background:#F5F7FC"></div>
<div class="a" style="left:0;top:0;width:89.5px;height:26.0px;background:linear-gradient(#DDE7F0,#FFFFFF 90%);border-radius:6px 10px 0 0"></div>
<svg style="left:4.7px;top:5.3px" width="16" height="16" viewBox="0 0 16 16"><rect x="1.500" y="1.500" width="5.500" height="4.500" rx="1.200" fill="#DCEBFB" stroke="#2F80D8" stroke-width="1.500"/><rect x="1.500" y="9.500" width="5.500" height="4.500" rx="1.200" fill="#DCEBFB" stroke="#2F80D8" stroke-width="1.500"/><path d="M8.500 3.800h6.500M8.500 8h4M8.500 11.800h6.500" stroke="#2F80D8" stroke-width="1.700"/></svg>
<div class="t " style="left:24.5px;top:6.3px;letter-spacing:0.166px;">Outline</div>
<svg style="left:71.0px;top:7.3px" width="12" height="12" viewBox="0 0 12 12"><path d="M1.5 1.500l9 9M10.500 1.500l-9 9" stroke="#777" stroke-width="3.200" fill="none"/><path d="M2 2l8 8M10 2l-8 8" stroke="#fff" stroke-width="1.300" fill="none"/></svg>
<svg style="left:93.7px;top:5.3px" width="16" height="16" viewBox="0 0 16 16"><rect x="3.500" y="1.500" width="9" height="13" fill="#ECECF2" stroke="#B9B9C6"/><path d="M5.500 5h5M5.500 7.500h5M5.500 10h5" stroke="#B9B9C6"/></svg>
<div class="t " style="left:113.8px;top:6.3px;letter-spacing:-0.857px;color:#a6a6a6">Task ...</div>
<svg style="left:161.5px;top:5.3px" width="16" height="16" viewBox="0 0 16 16"><circle cx="8" cy="8" r="6" fill="#F2FAF2" stroke="#9CCB9C" stroke-width="1.200"/><circle cx="8" cy="8" r="2.500" fill="#9CCB9C"/></svg>
<div class="t " style="left:181.6px;top:6.3px;letter-spacing:-0.080px;color:#a6a6a6">Build...</div>
<svg style="left:229.6px;top:5.3px" width="16" height="16" viewBox="0 0 16 16"><path d="M4 1.500h7l3 3v10H4z" fill="#FBF4F4" stroke="#D9A3A3"/><path d="M1 7h9v5H1z" fill="#E07A7A"/><path d="M6 6l5 7M11 6l-6 7" stroke="#C94A4A" stroke-width="1"/></svg>
<div class="t " style="left:250.4px;top:6.3px;letter-spacing:-0.281px;color:#a6a6a6">Docu...</div>
<svg style="left:310.6px;top:7.1px" width="12" height="12" viewBox="0 0 12 12"><rect x="1.5" y="1.5" width="8" height="3" fill="#fff" stroke="#555"/></svg>
<svg style="left:333.4px;top:7.3px" width="12" height="12" viewBox="0 0 12 12"><rect x="1.5" y="1.5" width="8" height="8" fill="#fff" stroke="#555"/><rect x="1.5" y="1.5" width="8" height="2" fill="#555"/></svg>
<svg style="left:167.7px;top:31.0px" width="16" height="16" viewBox="0 0 16 16"><circle cx="5" cy="5.500" r="3.300" fill="#B4B4B4"/><circle cx="11" cy="5" r="3" fill="#CACACA"/><circle cx="8" cy="11" r="3.500" fill="#9A9A9A"/></svg>
<svg style="left:189.7px;top:31.0px" width="16" height="16" viewBox="0 0 16 16"><rect x="2.500" y="2.500" width="11" height="11" rx="1.500" fill="#EAF1FA" stroke="#5A8FCF" stroke-width="1.400"/><path d="M5 8h6" stroke="#5A8FCF" stroke-width="1.600"/></svg>
<svg style="left:212.4px;top:31.0px" width="16" height="16" viewBox="0 0 16 16"><path d="M4 2v11" stroke="#555" stroke-width="1.200"/><path d="M1.500 10.500l2.500 3 2.500-3z" fill="#555"/><text x="7.500" y="7.500" font-size="9" font-weight="bold" fill="#2E9A7A" font-family="Liberation Sans,sans-serif">a</text><text x="9" y="15.500" font-size="10" font-weight="bold" fill="#A030B0" font-family="Liberation Sans,sans-serif">z</text></svg>
<svg style="left:235.7px;top:31.0px" width="16" height="16" viewBox="0 0 16 16"><circle cx="8" cy="8" r="4.500" fill="#DDEBFA" stroke="#3F7FCF" stroke-width="1.600"/><path d="M2 2l12 12" stroke="#2F4F9E" stroke-width="1.600"/></svg>
<svg style="left:258.4px;top:31.0px" width="16" height="16" viewBox="0 0 16 16"><path d="M3 11l8-6" stroke="#5A8FCF" stroke-width="3"/><path d="M2 3l12 11" stroke="#2F4F9E" stroke-width="1.500"/><text x="11" y="7" font-size="8" font-weight="bold" fill="#D8262C" font-family="Liberation Sans,sans-serif">s</text></svg>
<svg style="left:281.6px;top:31.0px" width="16" height="16" viewBox="0 0 16 16"><circle cx="8" cy="8.500" r="3.500" fill="#3FA64A" stroke="#2A7F35" stroke-width=".8"/></svg>
<svg style="left:303.7px;top:31.0px" width="16" height="16" viewBox="0 0 16 16"><path d="M2 5h12M2 9h12M6 2v12M10 2l-2 12M3 12l10-8" stroke="#111" stroke-width="1.500" fill="none"/></svg>
<svg style="left:332.4px;top:34.0px" width="12" height="8" viewBox="0 0 12 8"><path d="M1.500 1.500h9l-4.500 5z" fill="#fff" stroke="#666" stroke-width="1"/></svg>
<svg style="left:27.5px;top:51.0px" width="16" height="16" viewBox="0 0 16 16"><path d="M3 3h4v5h3V3h4v10H3z" fill="#2F6FB5"/><rect x="7" y="3" width="3" height="3" fill="#DCE8F8"/></svg>
<div class="t " style="left:54.5px;top:52.0px;letter-spacing:0.099px;">stdio.h</div>
<svg style="left:27.5px;top:69.0px" width="16" height="16" viewBox="0 0 16 16"><path d="M3 3h4v5h3V3h4v10H3z" fill="#2F6FB5"/><rect x="7" y="3" width="3" height="3" fill="#DCE8F8"/></svg>
<div class="t " style="left:54.5px;top:70.0px;letter-spacing:0.184px;">stdint.h</div>
<svg style="left:27.5px;top:87.0px" width="16" height="16" viewBox="0 0 16 16"><path d="M3 3h4v5h3V3h4v10H3z" fill="#2F6FB5"/><rect x="7" y="3" width="3" height="3" fill="#DCE8F8"/></svg>
<div class="t " style="left:54.5px;top:88.0px;letter-spacing:-0.276px;">max32650.h</div>
<svg style="left:27.5px;top:105.0px" width="16" height="16" viewBox="0 0 16 16"><path d="M3 3h4v5h3V3h4v10H3z" fill="#2F6FB5"/><rect x="7" y="3" width="3" height="3" fill="#DCE8F8"/></svg>
<div class="t " style="left:54.5px;top:106.0px;letter-spacing:0.086px;">led.h</div>
<svg style="left:27.5px;top:123.0px" width="16" height="16" viewBox="0 0 16 16"><path d="M3 3h4v5h3V3h4v10H3z" fill="#2F6FB5"/><rect x="7" y="3" width="3" height="3" fill="#DCE8F8"/></svg>
<div class="t " style="left:54.5px;top:124.0px;letter-spacing:-0.041px;">mxc_delay.h</div>
<svg style="left:27.5px;top:141.0px" width="16" height="16" viewBox="0 0 16 16"><path d="M3 3h4v5h3V3h4v10H3z" fill="#2F6FB5"/><rect x="7" y="3" width="3" height="3" fill="#DCE8F8"/></svg>
<div class="t " style="left:54.5px;top:142.0px;letter-spacing:-0.281px;">mxc_assert.h</div>
<div class="a" style="left:25.9px;top:158.5px;width:111.1px;height:17px;background:#D9D9D9"></div>
<svg style="left:27.5px;top:159.0px" width="16" height="16" viewBox="0 0 16 16"><circle cx="8" cy="8" r="3.300" fill="#3FA64A" stroke="#2A7F35" stroke-width=".8"/></svg>
<div class="t " style="left:54.5px;top:160.0px;letter-spacing:0.163px;">main(void) : int</div>
</div>
<div class="panel" style="left:486.3px;top:782.5px;width:1435.7px;height:233.5px;border-radius:6px 0 0 6px;">
<div class="tabrow" style="height:25.5px;background:#F5F7FC"></div>
<div class="a" style="left:135.2px;top:0;width:91.7px;height:25.5px;background:linear-gradient(#DDE7F0,#FFFFFF 90%);border-radius:10px 10px 0 0"></div>
<svg style="left:3.4px;top:5.9px" width="16" height="16" viewBox="0 0 16 16"><rect x="2.500" y="1.500" width="11" height="13" fill="#F1F1F6" stroke="#B9B9C6"/><circle cx="6" cy="5.500" r="2.200" fill="#E06A6A"/><path d="M4 12l2.500-4 2.500 4z" fill="#F1C14B"/><path d="M10 5v6" stroke="#9DB0CF" stroke-width="1.500"/></svg>
<div class="t " style="left:23.7px;top:6.9px;letter-spacing:-0.482px;color:#a6a6a6;font-style:italic">Problems</div>
<svg style="left:80.9px;top:5.9px" width="16" height="16" viewBox="0 0 16 16"><rect x="4.500" y="2.500" width="9" height="11" fill="#F4F4F8" stroke="#B9B9C6"/><path d="M2 9l3 3 5-6" stroke="#5A8FCF" stroke-width="1.800" fill="none"/></svg>
<div class="t " style="left:101.5px;top:6.9px;letter-spacing:-1.041px;color:#a6a6a6">Tasks</div>
<svg style="left:139.3px;top:5.9px" width="16" height="16" viewBox="0 0 16 16"><rect x="1.500" y="1.500" width="13" height="12" rx="2" fill="#2F5FA8" stroke="#1F4586"/><rect x="4" y="3.500" width="8" height="7" fill="#EAF1FA"/><path d="M6 8h3V6" stroke="#2F5FA8" fill="none"/></svg>
<div class="t " style="left:157.9px;top:6.9px;letter-spacing:-0.216px;">Console</div>
<svg style="left:208.3px;top:7.9px" width="12" height="12" viewBox="0 0 12 12"><path d="M1.5 1.500l9 9M10.500 1.500l-9 9" stroke="#777" stroke-width="3.200" fill="none"/><path d="M2 2l8 8M10 2l-8 8" stroke="#fff" stroke-width="1.300" fill="none"/></svg>
<svg style="left:229.6px;top:5.9px" width="16" height="16" viewBox="0 0 16 16"><rect x="1.500" y="2.500" width="13" height="11" fill="#F4F4F8" stroke="#B9B9C6"/><path d="M1.500 6h13M6 2.500v11" stroke="#B9B9C6"/></svg>
<div class="t " style="left:252.0px;top:6.9px;letter-spacing:-0.336px;color:#a6a6a6">Properties</div>
<svg style="left:1110.9px;top:5.9px" width="16" height="16" viewBox="0 0 16 16"><path d="M8 14l-5.500-6h3V2h5v6h3z" fill="#F7D154" stroke="#C9962A"/></svg>
<svg style="left:1134.2px;top:5.9px" width="16" height="16" viewBox="0 0 16 16"><path d="M8 2l-5.500 6h3v6h5V8h3z" fill="#F7D154" stroke="#C9962A"/></svg>
<div class="a" style="left:1154.2px;top:2.9px;width:22.9px;height:22.0px;background:#BBD7F7;border:1px solid #8DBBEF"></div>
<svg style="left:1157.7px;top:5.9px" width="16" height="16" viewBox="0 0 16 16"><path d="M1.500 5l3.500-3.500v2.200h5.500v2.600h-5.500v2.200z" fill="#FBE9A8" stroke="#D09A25" stroke-width="1.100"/><path d="M14.500 11l-3.500-3.500v2.200h-5.500v2.600h5.500v2.200z" fill="#FBE9A8" stroke="#D09A25" stroke-width="1.100"/></svg>
<div class="sep" style="left:1180.0px;top:4.9px;height:18px"></div>
<svg style="left:1188.9px;top:5.9px" width="16" height="16" viewBox="0 0 16 16"><rect x="1.500" y="1.500" width="13" height="13" fill="#E4E0CC" stroke="#BDB48A"/><rect x="3" y="3" width="6" height="10" fill="#AFC4E6"/><path d="M11 4v8" stroke="#8a8a8a" stroke-width="1.500"/></svg>
<svg style="left:1211.6px;top:5.9px" width="16" height="16" viewBox="0 0 16 16"><rect x="1.500" y="1.500" width="13" height="13" fill="#E4E0CC" stroke="#BDB48A"/><rect x="3" y="7" width="6" height="6" fill="#E9B84A"/><path d="M11 4v8" stroke="#8a8a8a" stroke-width="1.500"/></svg>
<svg style="left:1235.1px;top:5.9px" width="16" height="16" viewBox="0 0 16 16"><path d="M4 4h9M4 7h7M4 10h5" stroke="#C3CDE6" stroke-width="1.500"/></svg>
<svg style="left:1257.6px;top:5.9px" width="16" height="16" viewBox="0 0 16 16"><path d="M3 1.500h7l2 2v10H3z" fill="#E4E0CC" stroke="#BDB48A"/><path d="M4.500 5h5M4.500 7.500h5" stroke="#8DA3C4"/><path d="M9 9l5 5M14 9l-5 5" stroke="#555" stroke-width="1.600"/></svg>
<div class="sep" style="left:1280.1px;top:4.9px;height:18px"></div>
<svg style="left:1289.0px;top:5.9px" width="16" height="16" viewBox="0 0 16 16"><rect x="1.500" y="4.500" width="12" height="10" fill="#fff" stroke="#3C6DB0"/><rect x="1.500" y="4.500" width="12" height="2.500" fill="#3C6DB0"/><path d="M8 8l5-6 2 1.500-5 6z" fill="#2E9A2E"/></svg>
<svg style="left:1313.1px;top:5.9px" width="16" height="16" viewBox="0 0 16 16"><rect x="1.500" y="1.500" width="13" height="12" rx="2" fill="#2F5FA8" stroke="#1F4586"/><rect x="4" y="3.500" width="8" height="7" fill="#EAF1FA"/><path d="M6 8h3V6" stroke="#2F5FA8" fill="none"/></svg>
<svg style="left:1334.3px;top:11.9px" width="8" height="5" viewBox="0 0 8 5"><path d="M0.500 0.500h7l-3.500 4z" fill="#000"/></svg>
<svg style="left:1350.9px;top:5.9px" width="16" height="16" viewBox="0 0 16 16"><rect x="1.500" y="3.500" width="12" height="10" fill="#fff" stroke="#3C6DB0"/><rect x="1.500" y="3.500" width="12" height="3" fill="#3C6DB0"/><path d="M12.500 0.500l1 2.200 2.200 1-2.200 1-1 2.200-1-2.200-2.200-1 2.200-1z" fill="#F2C230" stroke="#B98A1A" stroke-width=".5"/></svg>
<svg style="left:1372.9px;top:11.9px" width="8" height="5" viewBox="0 0 8 5"><path d="M0.500 0.500h7l-3.500 4z" fill="#000"/></svg>
<svg style="left:1390.3px;top:7.7px" width="12" height="12" viewBox="0 0 12 12"><rect x="1.5" y="1.5" width="8" height="3" fill="#fff" stroke="#555"/></svg>
<svg style="left:1413.3px;top:7.9px" width="12" height="12" viewBox="0 0 12 12"><rect x="1.5" y="1.5" width="8" height="8" fill="#fff" stroke="#555"/><rect x="1.5" y="1.5" width="8" height="2" fill="#555"/></svg>
<div class="t " style="left:2.2px;top:28.0px;letter-spacing:-0.111px;">CDT Build Console [hello_world]</div>
<div class="a" style="left:0;right:0;top:42.6px;height:1px;background:#ABABAB"></div>
<div class="a" style="left:0;right:0;top:45.2px;bottom:0;overflow:hidden">
<div class="mono" style="left:3.7px;top:-9.7px">  CC    /C/MaximSDK/Libraries/CMSIS/../PeriphDrivers/Source/TPU/tpu_crc.c</div>
<div class="mono" style="left:3.7px;top:5.3px">  CC    /C/MaximSDK/Libraries/CMSIS/../PeriphDrivers/Source/TPU/tpu_me10.c</div>
<div class="mono" style="left:3.7px;top:20.3px">  CC    /C/MaximSDK/Libraries/CMSIS/../PeriphDrivers/Source/TPU/tpu_reva.c</div>
<div class="mono" style="left:3.7px;top:35.3px">  CC    /C/MaximSDK/Libraries/CMSIS/../PeriphDrivers/Source/UART/uart_me10.c</div>
<div class="mono" style="left:3.7px;top:50.3px">  CC    /C/MaximSDK/Libraries/CMSIS/../PeriphDrivers/Source/UART/uart_reva.c</div>
<div class="mono" style="left:3.7px;top:65.3px">  CC    /C/MaximSDK/Libraries/CMSIS/../PeriphDrivers/Source/UART/uart_common.c</div>
<div class="mono" style="left:3.7px;top:80.3px">  CC    /C/MaximSDK/Libraries/CMSIS/../PeriphDrivers/Source/WDT/wdt_me10.c</div>
<div class="mono" style="left:3.7px;top:95.3px">  CC    /C/MaximSDK/Libraries/CMSIS/../PeriphDrivers/Source/WDT/wdt_reva.c</div>
<div class="mono" style="left:3.7px;top:110.3px">  AR    /C/MaximSDK/Libraries/PeriphDrivers/bin/MAX32650/softfp/libPeriphDriver_softfp.a</div>
<div class="mono" style="left:3.7px;top:125.3px">make[1]: Leaving directory `/c/SW/maxim/hello_world&#x27;</div>
<div class="mono" style="left:3.7px;top:140.3px">  LD    /c/SW/maxim/hello_world/build/hello_world.elf</div>
</div>
<div class="a" style="left:1420.8px;top:45.2px;width:14.9px;height:169.6px;background:#F0F0F0"></div>
<div class="a" style="left:1420.8px;top:178.5px;width:14.9px;height:17.6px;background:#CDCDCD"></div>
<svg style="left:1423.9px;top:49.1px" width="8" height="8" viewBox="0 0 10 10"><path d="M1 6l4-4 4 4" stroke="#4a4a4a" stroke-width="2.200" fill="none"/></svg>
<svg style="left:1423.9px;top:200.9px" width="8" height="8" viewBox="0 0 10 10"><path d="M1 3l4 4 4-4" stroke="#4a4a4a" stroke-width="2.200" fill="none"/></svg>
<div class="a" style="left:1.8px;top:214.7px;width:1435.9px;height:15.1px;background:#F0F0F0"></div>
<svg style="left:5.8px;top:218.2px" width="8" height="8" viewBox="0 0 10 10"><path d="M6 1l-4 4 4 4" stroke="#9a9a9a" stroke-width="2.200" fill="none"/></svg>
<svg style="left:1407.2px;top:218.2px" width="8" height="8" viewBox="0 0 10 10"><path d="M3 1l4 4-4 4" stroke="#9a9a9a" stroke-width="2.200" fill="none"/></svg>
</div>
<div class="sep" style="left:1341.1px;top:1017.8px;height:20.6px;background:#A9ADC0"></div>
<div class="sep" style="left:1443.9px;top:1017.8px;height:20.6px;background:#A9ADC0"></div>
<div class="sep" style="left:1542.7px;top:1017.8px;height:20.6px;background:#A9ADC0"></div>
<div class="dots" style="left:1639.4px;top:1019.8px;height:17.6px"></div>
<div class="t " style="left:1348.3px;top:1021.0px;letter-spacing:0.061px;">Writable</div>
<div class="t " style="left:1452.7px;top:1021.0px;letter-spacing:-0.222px;">Smart Insert</div>
<div class="t " style="left:1550.7px;top:1021.0px;letter-spacing:-0.512px;">63 : 30 : 2392</div>
<div class="t " style="left:1645.7px;top:1021.0px;letter-spacing:0.078px;">Building Active Configuration: (0%)</div>
<div class="a" style="left:1864.9px;top:1024.1px;width:29.4px;height:10.2px;background:#06B025;box-shadow:0 0 0 1.500px #EEF0FA"></div>
<svg style="left:1899.5px;top:1019.5px" width="16" height="16" viewBox="0 0 16 16"><rect x="1.500" y="3.500" width="9" height="7" fill="#DDEBD8" stroke="#6FA06A"/><rect x="5.500" y="6.500" width="9" height="7" fill="#E8F2E4" stroke="#6FA06A"/></svg>
<div class="a" style="left:0;top:1038.17px;width:1920px;height:8px;background:#E7EBF9"></div>
<div class="a" style="left:0;top:1042.19px;width:1920px;height:6px;background:#2A2B2E"></div>
</div></body></html>
